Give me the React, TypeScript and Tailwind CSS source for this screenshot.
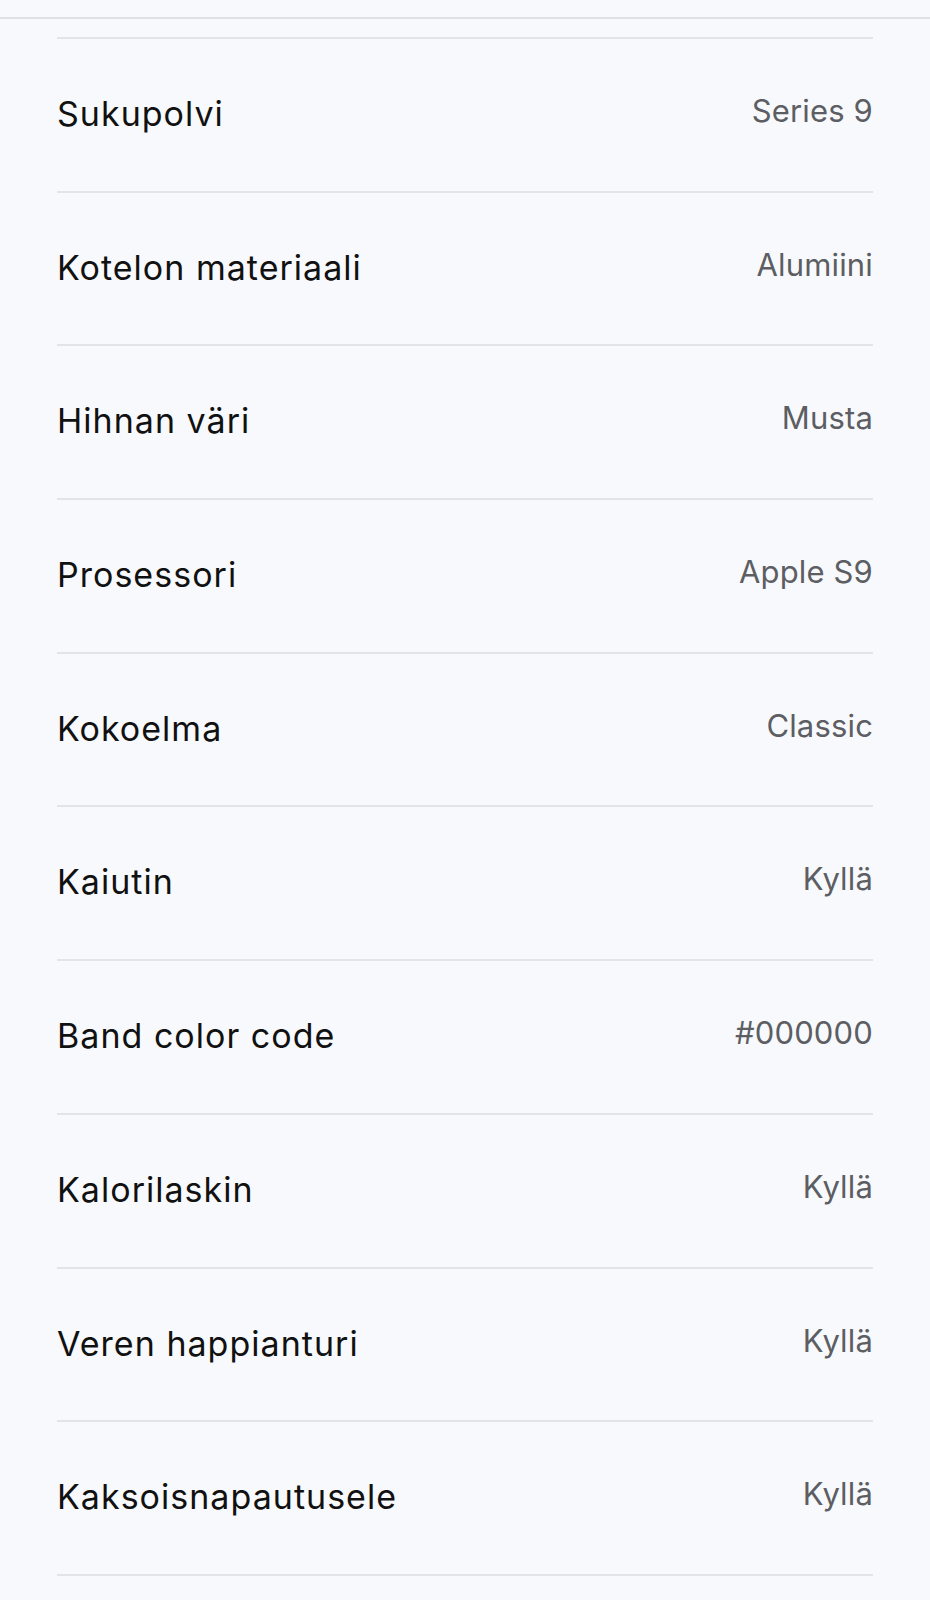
const specs: { label: string; value: string }[] = [
  { label: "Sukupolvi", value: "Series 9" },
  { label: "Kotelon materiaali", value: "Alumiini" },
  { label: "Hihnan väri", value: "Musta" },
  { label: "Prosessori", value: "Apple S9" },
  { label: "Kokoelma", value: "Classic" },
  { label: "Kaiutin", value: "Kyllä" },
  { label: "Band color code", value: "#000000" },
  { label: "Kalorilaskin", value: "Kyllä" },
  { label: "Veren happianturi", value: "Kyllä" },
  { label: "Kaksoisnapautusele", value: "Kyllä" },
];

function SpecRow({ label, value }: { label: string; value: string }) {
  return (
    <div className="flex h-[153.7px] items-start justify-between border-b-2 border-[#e2e4e9] pt-[56px]">
      <span className="mt-[2px] text-[34px] leading-none tracking-[0.03em] text-[#111111]">{label}</span>
      <span className="text-[31px] leading-none tracking-[0.005em] text-[#5c5e63]">{value}</span>
    </div>
  );
}

export default function App() {
  return (
    <div className="min-h-[1600px] bg-[#f8f9fc] font-['Inter',sans-serif]">
      <div className="h-[19px] border-b-2 border-[#dfe0e4]" />
      <div className="mx-[57px] mt-[18px] border-t-2 border-[#e2e4e9]">
        {specs.map((s) => (
          <SpecRow key={s.label} label={s.label} value={s.value} />
        ))}
      </div>
    </div>
  );
}
